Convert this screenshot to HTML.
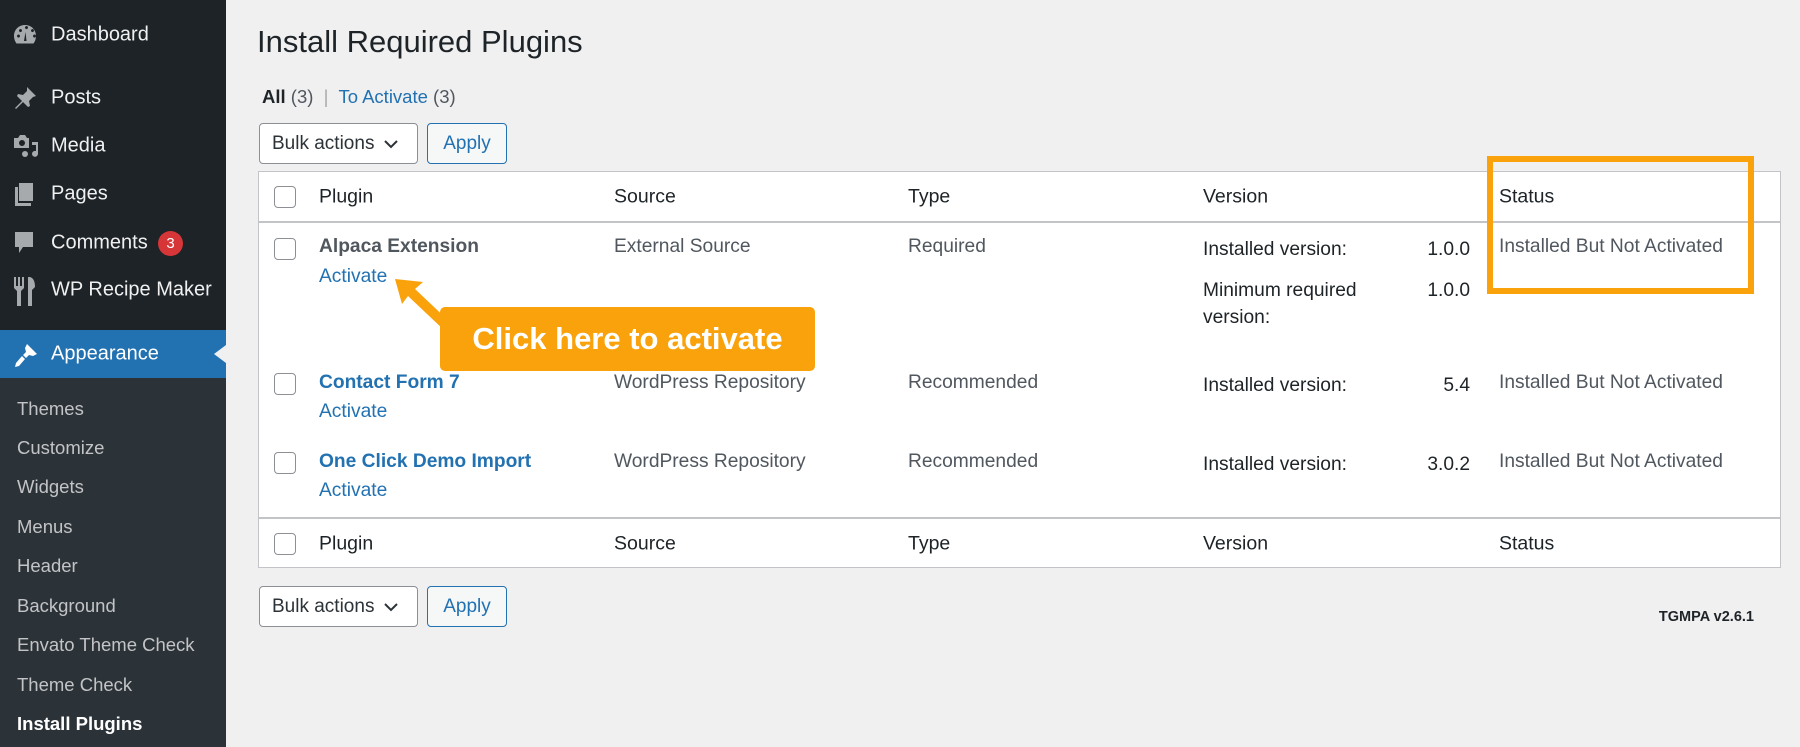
<!DOCTYPE html>
<html><head><meta charset="utf-8"><style>
*{margin:0;padding:0;box-sizing:border-box}
body{width:1800px;height:747px;overflow:hidden;background:#f0f0f1;font-family:"Liberation Sans",Arial,sans-serif;position:relative;color:#1d2327}
.a{position:absolute;white-space:nowrap}
#sb{position:absolute;left:0;top:0;width:226px;height:747px;background:#1d2327}
#sub{position:absolute;left:0;top:378px;width:226px;height:369px;background:#2c3338}
.mi{position:absolute;left:51px;font-size:20px;color:#f0f0f1;transform:translateY(-50%)}
.ic{position:absolute;left:13px;fill:#a7aaad}
.si{position:absolute;left:17px;font-size:18.5px;color:#c3c4c7;transform:translateY(-50%)}
.t{font-size:19.2px;color:#50575e;transform:translateY(-50%)}
.h{font-size:19.5px;color:#1d2327;transform:translateY(-50%)}
.lk{color:#2271b1}
.cb{position:absolute;left:274px;width:22px;height:22px;border:1.5px solid #8c8f94;border-radius:4px;background:#fff}
.btn{position:absolute;height:41px;border-radius:4px;font-size:19px;display:flex;align-items:center}
</style></head><body>
<div id="sb"></div>
<div id="sub"></div>
<div class="a" style="left:0;top:330px;width:226px;height:48px;background:#2271b1"></div>
<div class="a" style="left:214px;top:345px;width:0;height:0;border-top:9px solid transparent;border-bottom:9px solid transparent;border-right:12px solid #f0f0f1"></div>

<svg class="ic" style="top:24px" width="24" height="22" viewBox="0 0 24 22"><path d="M12 1C5.5 1 1 6 1 12c0 3 1 5.5 2.5 7.5h17C22 17.5 23 15 23 12 23 6 18.5 1 12 1zM4 12a1.5 1.5 0 110 .1zM6 6.5a1.5 1.5 0 110 .1zM12 3.5a1.5 1.5 0 110 .1zM18 6.5a1.5 1.5 0 110 .1zM20 12a1.5 1.5 0 110 .1z" fill-rule="evenodd"/><path d="M11 17l1.5-9 1 9z" fill="#1d2327"/></svg>
<div class="mi" style="top:35px">Dashboard</div>
<svg class="ic" style="top:86px" width="24" height="24" viewBox="0 0 24 24"><path d="M14 1l9 9-3 1-4 4 1 5-2 1-5-5-7 7-1-1 7-7-5-5 1-2 5 1 4-4z"/></svg>
<div class="mi" style="top:98px">Posts</div>
<svg class="ic" style="top:134px" width="26" height="24" viewBox="0 0 26 24"><path d="M1 4h4l2-3h5l2 3h2v10H1zm8 2a3 3 0 100 6 3 3 0 000-6zM19 8h6v12a3 3 0 11-2-3V11h-4z"/><circle cx="12" cy="20" r="3"/></svg>
<div class="mi" style="top:146px">Media</div>
<svg class="ic" style="top:182px" width="22" height="24" viewBox="0 0 22 24"><path d="M6 1h14v18H6zM2 5h3v16h13v3H2z"/></svg>
<div class="mi" style="top:194px">Pages</div>
<svg class="ic" style="top:231px" width="22" height="24" viewBox="0 0 22 24"><path d="M2 1h18v15H10l-4 6v-6H2z"/></svg>
<div class="mi" style="top:243px">Comments</div>
<div class="a" style="left:158px;top:231px;width:25px;height:25px;border-radius:50%;background:#d63638;color:#fff;font-size:15px;text-align:center;line-height:25px">3</div>
<svg class="ic" style="top:276px" width="24" height="30" viewBox="0 0 24 30"><path d="M1 1h2v9h2V1h2v9h2V1h2v11l-3 3v15H4V15L1 12zM16 1c4 0 6 4 6 10l-3 3v16h-4V1z"/></svg>
<div class="mi" style="top:290px">WP Recipe Maker</div>
<svg class="ic" style="top:342px;fill:#fff" width="26" height="26" viewBox="0 0 26 26"><path d="M14 2l10 10-4 2-4-1-3 3-3-3 3-3-1-4zM9 14l3 3-6 7-4 1 1-4z"/></svg>
<div class="mi" style="top:354px;color:#fff">Appearance</div>

<div class="si" style="top:409px">Themes</div>
<div class="si" style="top:448px">Customize</div>
<div class="si" style="top:487px">Widgets</div>
<div class="si" style="top:527px">Menus</div>
<div class="si" style="top:566px">Header</div>
<div class="si" style="top:606px">Background</div>
<div class="si" style="top:645px">Envato Theme Check</div>
<div class="si" style="top:685px">Theme Check</div>
<div class="si" style="top:724px;color:#fff;font-weight:bold">Install Plugins</div>

<div class="a" style="left:257px;top:42px;transform:translateY(-50%);font-size:31px;color:#1d2327">Install Required Plugins</div>
<div class="a" style="left:262px;top:97px;transform:translateY(-50%);font-size:18.5px;color:#50575e"><b style="color:#1d2327">All</b> (3) &nbsp;<span style="color:#a7aaad">|</span>&nbsp; <span class="lk">To Activate</span> (3)</div>

<div class="btn" style="left:259px;top:123px;width:159px;border:1px solid #8c8f94;background:#fff;padding-left:12px;color:#2c3338">Bulk actions <svg style="margin-left:10px" width="14" height="10" viewBox="0 0 14 10"><path d="M1 2l6 6 6-6" stroke="#2c3338" stroke-width="2" fill="none"/></svg></div>
<div class="btn" style="left:427px;top:123px;width:80px;border:1.5px solid #2271b1;background:#f6f7f7;color:#2271b1;justify-content:center">Apply</div>

<div class="a" style="left:258px;top:171px;width:1523px;height:397px;background:#fff;border:1.5px solid #c3c4c7"></div>
<div class="a" style="left:258px;top:221px;width:1523px;height:1.5px;background:#c3c4c7"></div>
<div class="a" style="left:258px;top:517px;width:1523px;height:1.5px;background:#c3c4c7"></div>

<div class="cb" style="top:186px"></div>
<div class="a h" style="left:319px;top:197px">Plugin</div>
<div class="a h" style="left:614px;top:197px">Source</div>
<div class="a h" style="left:908px;top:197px">Type</div>
<div class="a h" style="left:1203px;top:197px">Version</div>
<div class="a h" style="left:1499px;top:197px">Status</div>

<div class="cb" style="top:238px"></div>
<div class="a t" style="left:319px;top:247px;font-weight:bold">Alpaca Extension</div>
<div class="a t lk" style="left:319px;top:277px">Activate</div>
<div class="a t" style="left:614px;top:247px">External Source</div>
<div class="a t" style="left:908px;top:247px">Required</div>
<div class="a t" style="left:1203px;top:250px;color:#1d2327">Installed version:</div>
<div class="a t" style="left:1420px;top:250px;width:50px;text-align:right;color:#1d2327">1.0.0</div>
<div class="a t" style="left:1203px;top:291px;color:#1d2327">Minimum required</div>
<div class="a t" style="left:1203px;top:318px;color:#1d2327">version:</div>
<div class="a t" style="left:1420px;top:291px;width:50px;text-align:right;color:#1d2327">1.0.0</div>
<div class="a t" style="left:1499px;top:247px">Installed But Not Activated</div>

<div class="cb" style="top:373px"></div>
<div class="a t lk" style="left:319px;top:383px;font-weight:bold;color:#2271b1">Contact Form 7</div>
<div class="a t lk" style="left:319px;top:412px">Activate</div>
<div class="a t" style="left:614px;top:383px">WordPress Repository</div>
<div class="a t" style="left:908px;top:383px">Recommended</div>
<div class="a t" style="left:1203px;top:386px;color:#1d2327">Installed version:</div>
<div class="a t" style="left:1420px;top:386px;width:50px;text-align:right;color:#1d2327">5.4</div>
<div class="a t" style="left:1499px;top:383px">Installed But Not Activated</div>

<div class="cb" style="top:452px"></div>
<div class="a t lk" style="left:319px;top:462px;font-weight:bold;color:#2271b1">One Click Demo Import</div>
<div class="a t lk" style="left:319px;top:491px">Activate</div>
<div class="a t" style="left:614px;top:462px">WordPress Repository</div>
<div class="a t" style="left:908px;top:462px">Recommended</div>
<div class="a t" style="left:1203px;top:465px;color:#1d2327">Installed version:</div>
<div class="a t" style="left:1420px;top:465px;width:50px;text-align:right;color:#1d2327">3.0.2</div>
<div class="a t" style="left:1499px;top:462px">Installed But Not Activated</div>

<div class="cb" style="top:533px"></div>
<div class="a h" style="left:319px;top:544px">Plugin</div>
<div class="a h" style="left:614px;top:544px">Source</div>
<div class="a h" style="left:908px;top:544px">Type</div>
<div class="a h" style="left:1203px;top:544px">Version</div>
<div class="a h" style="left:1499px;top:544px">Status</div>

<div class="btn" style="left:259px;top:586px;width:159px;border:1px solid #8c8f94;background:#fff;padding-left:12px;color:#2c3338">Bulk actions <svg style="margin-left:10px" width="14" height="10" viewBox="0 0 14 10"><path d="M1 2l6 6 6-6" stroke="#2c3338" stroke-width="2" fill="none"/></svg></div>
<div class="btn" style="left:427px;top:586px;width:80px;border:1.5px solid #2271b1;background:#f6f7f7;color:#2271b1;justify-content:center">Apply</div>
<div class="a" style="left:1650px;top:617px;width:104px;text-align:right;transform:translateY(-50%);font-size:14.5px;font-weight:bold;color:#1d2327">TGMPA v2.6.1</div>

<div class="a" style="left:1487px;top:156px;width:267px;height:138px;border:6px solid #f9a20b"></div>
<div class="a" style="left:440px;top:307px;width:375px;height:64px;background:#f9a20b;border-radius:5px;color:#fff;font-weight:bold;font-size:31px;display:flex;align-items:center;justify-content:center">Click here to activate</div>
<svg class="a" style="left:390px;top:274px" width="70" height="60" viewBox="0 0 70 60"><path d="M5 5L33 8 25 15 62 50 54 56 18 22 12 30z" fill="#f9a20b"/></svg>
</body></html>
